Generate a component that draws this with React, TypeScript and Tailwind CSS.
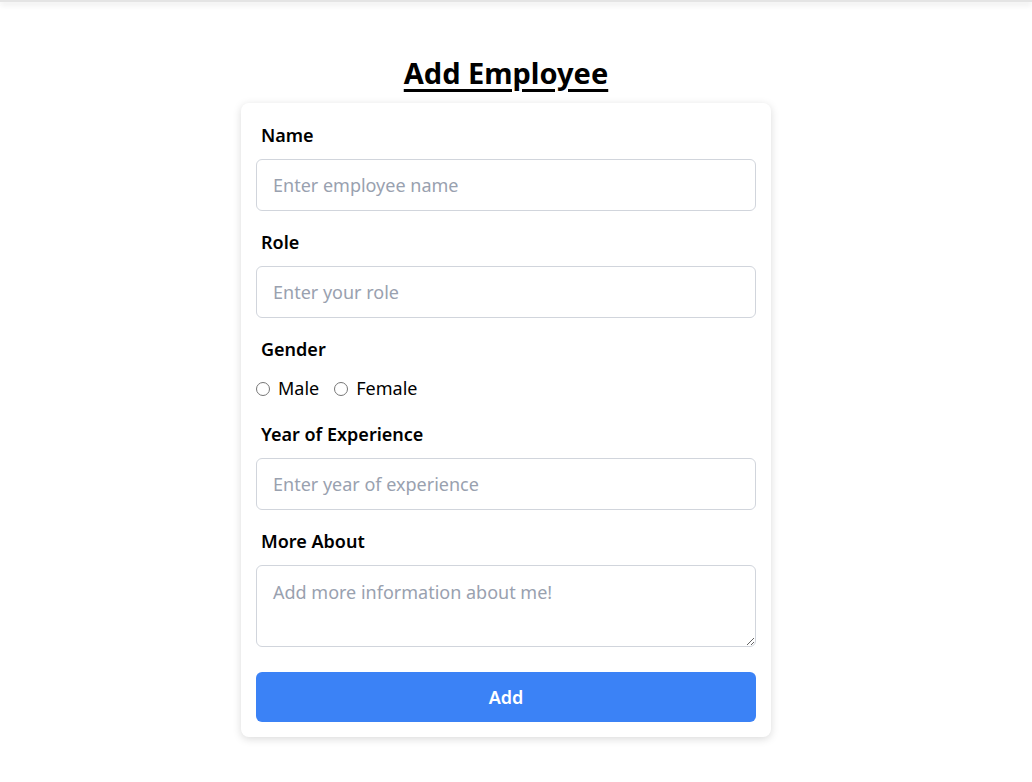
import React from "react";

export default function App() {
  const font = { fontFamily: '"Noto Sans", "Open Sans", sans-serif' };
  return (
    <div className="min-h-screen bg-white text-black" style={font}>
      <div className="h-[2px] bg-[#e4e4e4] shadow-[0_2px_6px_rgba(0,0,0,0.18)]" />
      <div className="flex flex-col items-center pr-[20px] pt-[53px]">
        <h1 className="text-[29px] font-bold leading-[36px] underline decoration-[3px] underline-offset-[5px]">
          Add Employee
        </h1>
        <form className="mt-[12px] w-[530px] rounded-lg bg-white px-[15px] pb-[15px] pt-[19px] shadow-[0_2px_8px_rgba(0,0,0,0.15)]">
          <Field label="Name" placeholder="Enter employee name" />
          <Field label="Role" placeholder="Enter your role" />
          <div className="mb-[19px]">
            <label className="block px-[5px] text-[18px] font-semibold leading-[27px]">Gender</label>
            <div className="mt-[12px] flex items-center text-[18px] leading-[27px]">
              <label className="flex items-center">
                <input type="radio" name="gender" className="m-0 h-[14px] w-[14px]" />
                <span className="ml-[8px]">Male</span>
              </label>
              <label className="ml-[15px] flex items-center">
                <input type="radio" name="gender" className="m-0 h-[14px] w-[14px]" />
                <span className="ml-[8px]">Female</span>
              </label>
            </div>
          </div>
          <Field label="Year of Experience" placeholder="Enter year of experience" />
          <div className="mb-[25px]">
            <label className="block px-[5px] text-[18px] font-semibold leading-[27px]">More About</label>
            <textarea
              placeholder="Add more information about me!"
              className="mt-[10px] block h-[82px] w-full rounded-md border border-gray-300 px-4 pb-[10px] pt-[13px] text-[18px] leading-[27px] placeholder:text-gray-400 outline-none"
            />
          </div>
          <button
            type="button"
            className="block h-[50px] w-full rounded-md bg-[#3b82f6] text-[18px] font-semibold text-white"
          >
            Add
          </button>
        </form>
      </div>
    </div>
  );
}

function Field({ label, placeholder }: { label: string; placeholder: string }) {
  return (
    <div className="mb-[18px]">
      <label className="block px-[5px] text-[18px] font-semibold leading-[27px]">{label}</label>
      <input
        type="text"
        placeholder={placeholder}
        className="mt-[10px] block h-[52px] w-full rounded-md border border-gray-300 px-4 text-[18px] placeholder:text-gray-400 outline-none"
      />
    </div>
  );
}
